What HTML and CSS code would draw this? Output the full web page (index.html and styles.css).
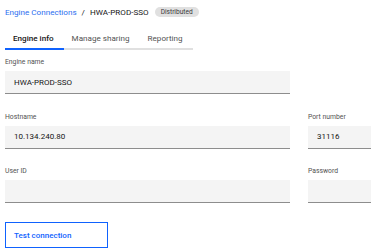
FILE: index.html
```html
<!DOCTYPE html>
<html lang="en">
<head>
    <meta charset="UTF-8">
    <meta name="viewport" content="width=device-width, initial-scale=1.0">
    <title>HWA-PROD-SSO - Engine Connections</title>
    <link rel="stylesheet" href="styles.css">
</head>
<body>
    <div class="page">
        <div class="breadcrumb">
            <a href="#" class="crumb-link">Engine Connections</a>
            <span class="crumb-sep">/</span>
            <span class="crumb-current">HWA-PROD-SSO</span>
            <span class="tag">Distributed</span>
        </div>

        <div class="tabs">
            <button class="tab active">Engine info</button>
            <button class="tab">Manage sharing</button>
            <button class="tab">Reporting</button>
        </div>

        <form class="engine-form">
            <div class="form-row single">
                <div class="form-group">
                    <label for="engineName">Engine name</label>
                    <input type="text" id="engineName" value="HWA-PROD-SSO">
                </div>
            </div>

            <div class="form-row">
                <div class="form-group">
                    <label for="hostname">Hostname</label>
                    <input type="text" id="hostname" value="10.134.240.80">
                </div>
                <div class="form-group">
                    <label for="port">Port number</label>
                    <input type="text" id="port" value="31116">
                </div>
            </div>

            <div class="form-row">
                <div class="form-group">
                    <label for="userId">User ID</label>
                    <input type="text" id="userId">
                </div>
                <div class="form-group">
                    <label for="password">Password</label>
                    <input type="password" id="password">
                </div>
            </div>

            <button type="button" class="test-btn">Test connection</button>
        </form>
    </div>
</body>
</html>
```

FILE: styles.css
```css
html, body {
    margin: 0;
    padding: 0;
    overflow: hidden;
    background: #ffffff;
}

body {
    font-family: 'Roboto', 'Liberation Sans', sans-serif;
    color: #161616;
}

.page {
    padding: 4px 0 0 5px;
}

.breadcrumb {
    display: flex;
    align-items: center;
    height: 16px;
    font-size: 8.1px;
}

.crumb-link {
    color: #2a6ef0;
    text-decoration: none;
}

.crumb-sep {
    margin: 0 5px;
    color: #161616;
}

.crumb-current {
    color: #161616;
}

.tag {
    margin-left: 6px;
    height: 10px;
    line-height: 10px;
    padding: 0 6px;
    border-radius: 6px;
    background: #e0e0e0;
    color: #393939;
    font-size: 6.6px;
}

.tabs {
    display: flex;
    margin-top: 7px;
}

.tab {
    height: 23px;
    padding: 0 10px 0 8px;
    border: none;
    border-bottom: 2px solid #e0e0e0;
    background: none;
    font-family: inherit;
    font-size: 8.1px;
    color: #525252;
    cursor: pointer;
}

.tab.active {
    color: #161616;
    font-weight: 500;
    border-bottom-color: #0f62fe;
}

.engine-form {
    margin-top: 8px;
}

.form-row {
    display: grid;
    grid-template-columns: 285px 1fr;
    column-gap: 18px;
    margin-bottom: 18.5px;
}

.form-group label {
    display: block;
    height: 9px;
    line-height: 9px;
    margin-bottom: 4px;
    font-size: 6.8px;
    color: #525252;
}

.form-group input {
    display: block;
    width: 100%;
    height: 23px;
    box-sizing: border-box;
    padding: 0 9px;
    border: none;
    border-bottom: 1px solid #8d8d8d;
    background: #f4f4f4;
    font-family: inherit;
    font-size: 8px;
    color: #161616;
    outline: none;
}

.test-btn {
    display: block;
    width: 103px;
    height: 26px;
    margin-top: 19px;
    padding: 0 8px;
    text-align: left;
    border: 1px solid #0f62fe;
    background: #ffffff;
    color: #0f62fe;
    font-family: inherit;
    font-size: 8px;
    font-weight: 500;
    cursor: pointer;
}
```
